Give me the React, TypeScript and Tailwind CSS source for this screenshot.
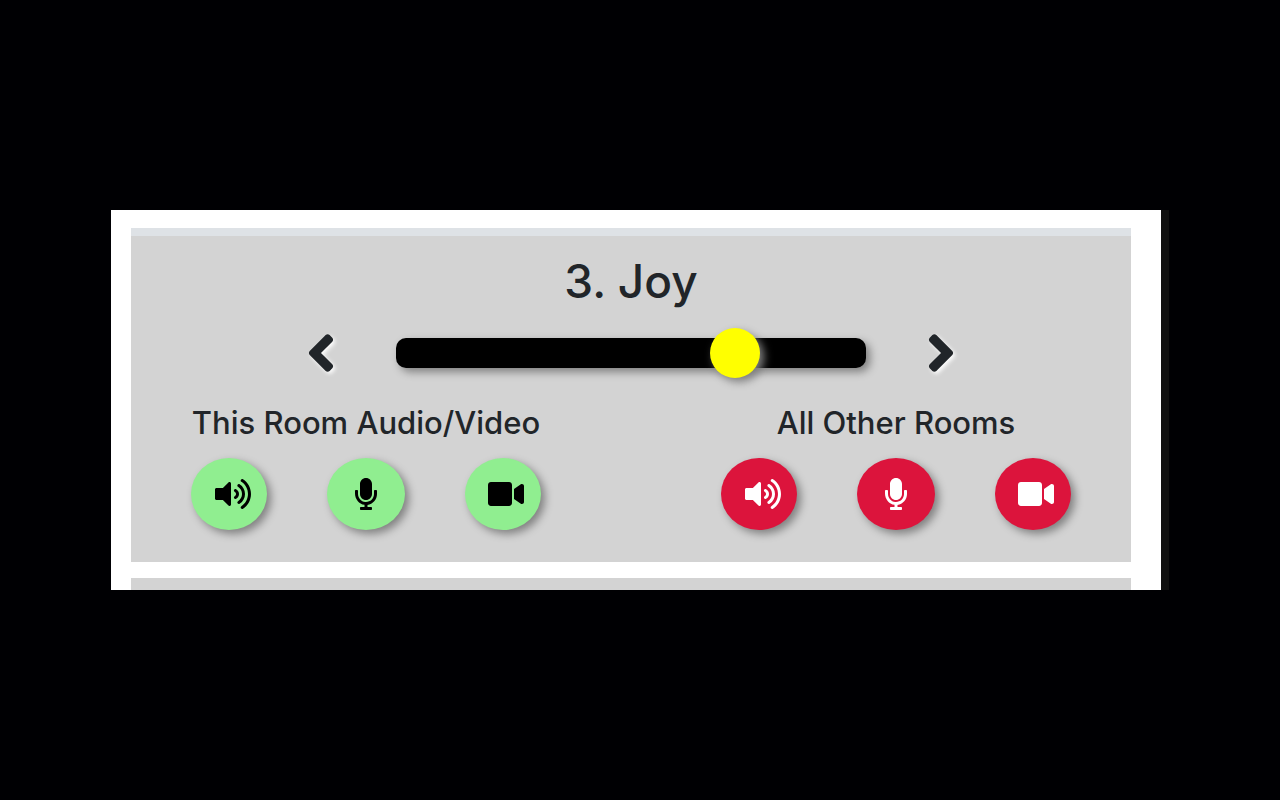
import { useState } from "react";
import {
  FaAngleLeft,
  FaAngleRight,
  FaMicrophone,
  FaVideo,
  FaVolumeUp,
} from "react-icons/fa";

type Tone = "on" | "off";

const tones: Record<Tone, string> = {
  on: "bg-[#90ee90] text-black",
  off: "bg-[#dc143c] text-white",
};

const round =
  "flex h-[72px] items-center rounded-[50%] text-[32px] shadow-[4px_4px_8px_gray]";

function DeviceGroup({ title, tone }: { title: string; tone: Tone }) {
  return (
    <section className="flex flex-col items-center gap-4">
      <h2 className="text-[31px] leading-[38px] font-medium whitespace-nowrap">{title}</h2>
      <div className="flex gap-[60px]">
        <button type="button" aria-label={`${title} speaker`} className={`${round} w-[76px] pl-6 ${tones[tone]}`}>
          <FaVolumeUp className="h-8 w-9 shrink-0" />
        </button>
        <button type="button" aria-label={`${title} microphone`} className={`${round} w-[78px] justify-center ${tones[tone]}`}>
          <FaMicrophone className="h-8 w-[22px] shrink-0" />
        </button>
        <button type="button" aria-label={`${title} camera`} className={`${round} w-[76px] pl-[23px] ${tones[tone]}`}>
          <FaVideo className="h-8 w-9 shrink-0" />
        </button>
      </div>
    </section>
  );
}

export default function App() {
  const [level, setLevel] = useState(74);
  return (
    <main className="flex min-h-screen items-center bg-[#000003] px-[111px] font-['Inter','Liberation_Sans',sans-serif] text-[#212529]">
      <div className="flex-1 border-r-8 border-[#0f0f0f]">
        <div className="bg-white pt-[18px] pr-[30px] pl-5">
          <article className="border-t-8 border-[#dee2e6] bg-[#d3d3d3] px-[60px] pt-4 pb-8">
            <h1 className="text-center text-[46px] leading-[58px] font-medium">3. Joy</h1>
            <div className="mt-[13px] flex h-[60px] items-center justify-center gap-[60px]">
              <button type="button" aria-label="Previous" className="drop-shadow-[2px_2px_2px_white]">
                <FaAngleLeft className="h-[60px] w-[30px]" />
              </button>
              <input
                type="range"
                aria-label="Volume"
                min={0}
                max={99}
                value={level}
                onChange={(e) => setLevel(Number(e.target.value))}
                className="h-[30px] w-[470px] appearance-none rounded-[10px] bg-black shadow-[4px_4px_8px_gray] [&::-webkit-slider-thumb]:h-[50px] [&::-webkit-slider-thumb]:w-[50px] [&::-webkit-slider-thumb]:appearance-none [&::-webkit-slider-thumb]:rounded-full [&::-webkit-slider-thumb]:bg-[#ffff00] [&::-webkit-slider-thumb]:shadow-[4px_4px_8px_gray]"
              />
              <button type="button" aria-label="Next" className="drop-shadow-[2px_2px_2px_white]">
                <FaAngleRight className="h-[60px] w-[30px]" />
              </button>
            </div>
            <div className="mt-[21px] flex justify-between">
              <DeviceGroup title="This Room Audio/Video" tone="on" />
              <DeviceGroup title="All Other Rooms" tone="off" />
            </div>
          </article>
          <div className="mt-4 h-3 bg-[#d3d3d3]" />
        </div>
      </div>
    </main>
  );
}
